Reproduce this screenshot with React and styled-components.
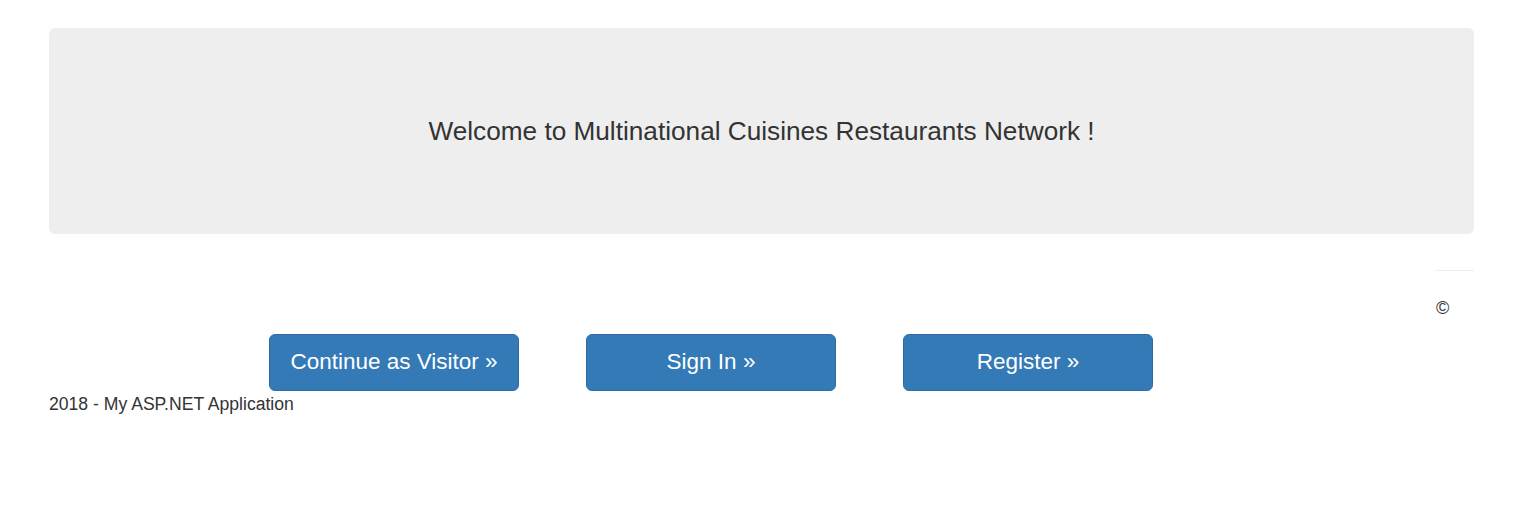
import React from "react";
import styled, { createGlobalStyle } from "styled-components";

const Global = createGlobalStyle`
  html, body { margin: 0; padding: 0; background: #fff; }
  body {
    font-family: "Liberation Sans", Arial, sans-serif;
    color: #333;
  }
`;

const Page = styled.div`
  padding: 28px 49px 0;
`;

const Jumbotron = styled.div`
  height: 206px;
  background: #eeeeee;
  border-radius: 6px;
  display: flex;
  align-items: center;
  justify-content: center;
`;

const Welcome = styled.p`
  margin: 0;
  font-size: 26.2px;
  line-height: 1.1;
  color: #333;
`;

const Footer = styled.footer`
  display: flex;
  flex-direction: column;
`;

const Aside = styled.div`
  align-self: flex-end;
  width: 39px;
`;

const Rule = styled.hr`
  margin: 36px 0 0;
  border: 0;
  border-top: 1px solid #eee;
`;

const Copy = styled.div`
  margin-top: 27px;
  font-size: 18px;
  line-height: 20px;
  padding-left: 1px;
`;

const Buttons = styled.div`
  display: flex;
  gap: 67px;
  margin-top: 16px;
  padding-left: 220px;
`;

const Button = styled.a`
  box-sizing: border-box;
  width: 250px;
  height: 57px;
  padding-bottom: 2px;
  display: flex;
  align-items: center;
  justify-content: center;
  background: #337ab7;
  border: 1px solid #2e6da4;
  border-radius: 6px;
  color: #fff;
  font-size: 22.5px;
  text-decoration: none;
  cursor: pointer;
`;

const Note = styled.p`
  margin: 2px 0 0;
  font-size: 17.6px;
  line-height: 22px;
`;

export default function App() {
  return (
    <>
      <Global />
      <Page>
        <Jumbotron>
          <Welcome>Welcome to Multinational Cuisines Restaurants Network !</Welcome>
        </Jumbotron>
        <Footer>
          <Aside>
            <Rule />
            <Copy>©</Copy>
          </Aside>
          <Buttons>
            <Button>Continue as Visitor »</Button>
            <Button>Sign In »</Button>
            <Button>Register »</Button>
          </Buttons>
          <Note>2018 - My ASP.NET Application</Note>
        </Footer>
      </Page>
    </>
  );
}
